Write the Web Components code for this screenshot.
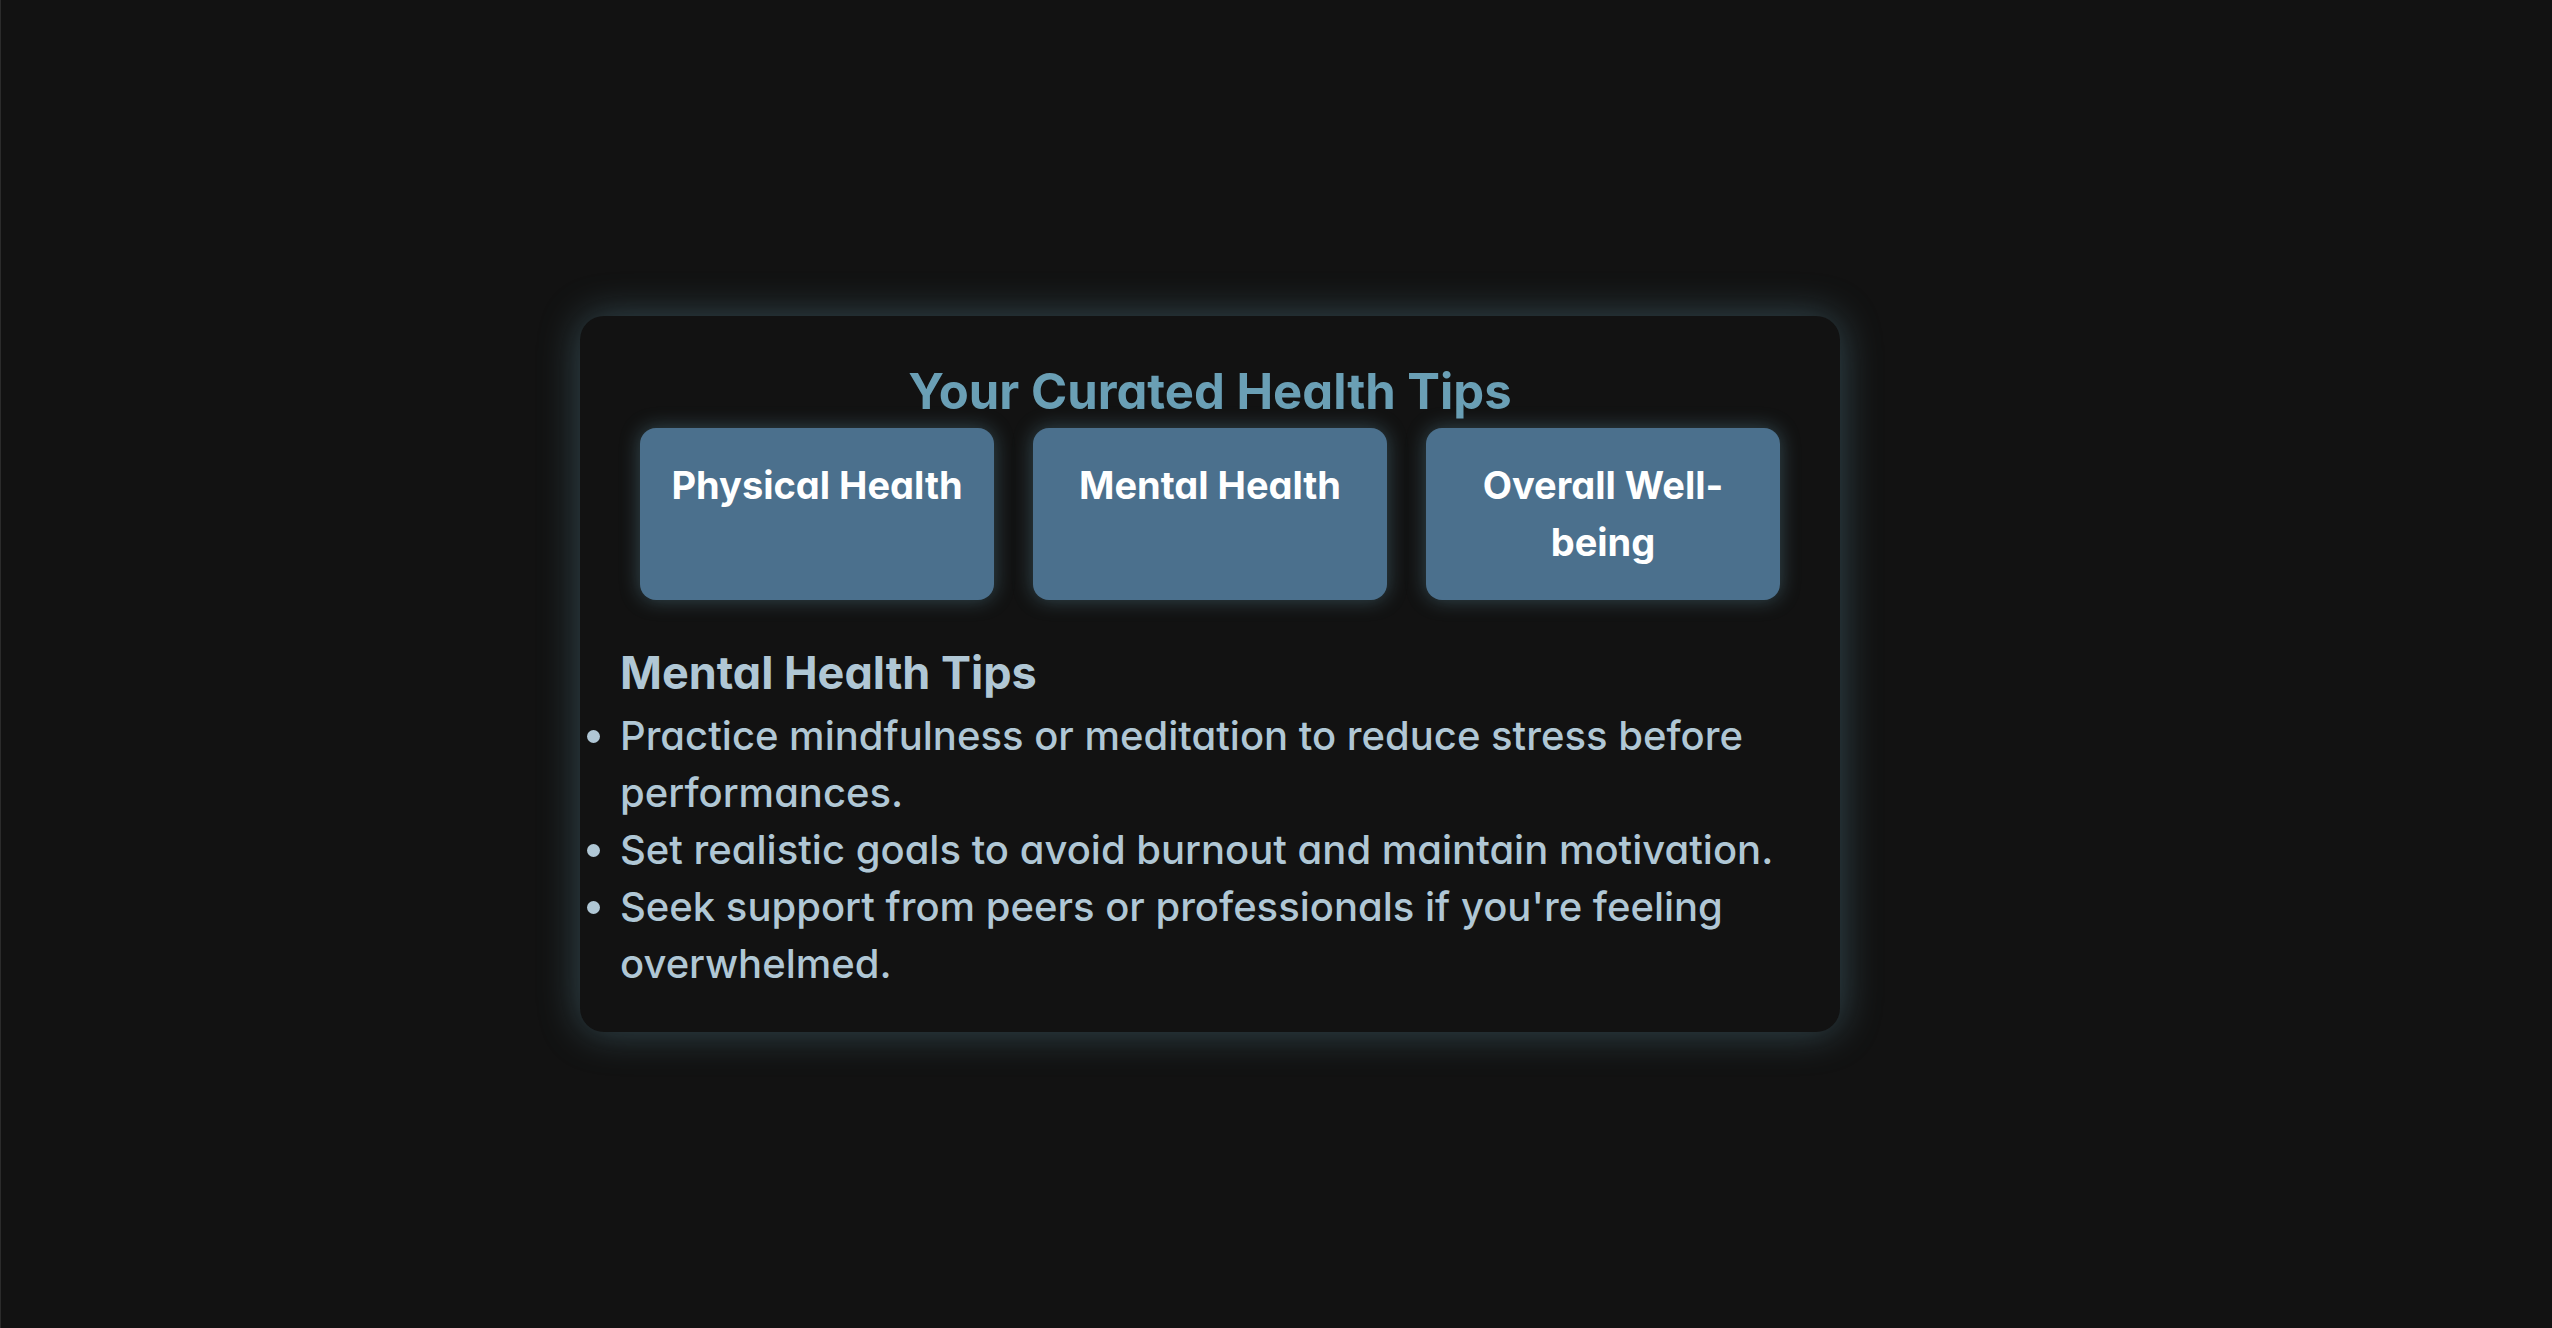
<!DOCTYPE html>
<html lang="en">
<head>
<meta charset="utf-8">
<title>Health Tips</title>
<style>
  body {
    margin: 0;
    background: #121212;
    color: #b0c7d5;
    font-family: Inter, "Open Sans", sans-serif;
    font-feature-settings: "cv11";
  }
</style>
</head>
<body>
<health-page>
  <tips-card heading="Your Curated Health Tips">
    <category-button slot="categories">Physical Health</category-button>
    <category-button slot="categories">Mental Health</category-button>
    <category-button slot="categories">Overall Well-being</category-button>
    <tip-list heading="Mental Health Tips">
      <tip-item>Practice mindfulness or meditation to reduce stress before performances.</tip-item>
      <tip-item>Set realistic goals to avoid burnout and maintain motivation.</tip-item>
      <tip-item>Seek support from peers or professionals if you're feeling overwhelmed.</tip-item>
    </tip-list>
  </tips-card>
</health-page>
<script>
  class BaseElement extends HTMLElement {
    connectedCallback() {
      if (this.shadowRoot) return;
      this.attachShadow({ mode: "open" }).innerHTML = this.constructor.markup;
      const heading = this.shadowRoot.querySelector("h2, h3");
      if (heading) heading.textContent = this.getAttribute("heading");
    }
  }

  customElements.define("health-page", class extends BaseElement {
    static markup = `
      <style>
        :host { display: block; }
        main {
          box-sizing: border-box;
          min-height: 100vh;
          display: flex;
          align-items: center;
          justify-content: center;
          padding: 20px 133px 0 0;
          border-left: 1px solid #2b2b2b;
        }
      </style>
      <main><slot></slot></main>`;
  });

  customElements.define("tips-card", class extends BaseElement {
    static markup = `
      <style>
        :host {
          display: block;
          box-sizing: border-box;
          width: 100%;
          max-width: 1260px;
          padding: 40px;
          border-radius: 24px;
          background: #121212;
          box-shadow: 0 0 40px rgba(106, 159, 181, 0.4);
        }
        h2 {
          margin: 0;
          font-size: 49px;
          font-weight: 700;
          line-height: 72px;
          text-align: center;
          color: #6a9fb5;
        }
        .categories {
          display: grid;
          grid-template-columns: repeat(3, 1fr);
          gap: 39px;
          padding: 0 20px;
          margin-bottom: 38px;
        }
      </style>
      <h2></h2>
      <div class="categories"><slot name="categories"></slot></div>
      <slot></slot>`;
  });

  customElements.define("category-button", class extends BaseElement {
    static markup = `
      <style>
        :host { display: flex; }
        button {
          flex: 1;
          display: flex;
          align-items: flex-start;
          justify-content: center;
          padding: 29px 16px;
          border: 0;
          border-radius: 16px;
          background: #4b708d;
          color: #fff;
          font: inherit;
          font-feature-settings: inherit;
          font-size: 38px;
          font-weight: 700;
          line-height: 57px;
          text-align: center;
          box-shadow: 0 0 20px rgba(106, 159, 181, 0.4);
          cursor: pointer;
        }
      </style>
      <button type="button"><span><slot></slot></span></button>`;
  });

  customElements.define("tip-list", class extends BaseElement {
    static markup = `
      <style>
        :host { display: block; }
        h3 {
          margin: 0;
          font-size: 45px;
          font-weight: 700;
          line-height: 69px;
        }
        .list { display: block; }
      </style>
      <h3></h3>
      <div class="list" role="list"><slot></slot></div>`;
  });

  customElements.define("tip-item", class extends BaseElement {
    static markup = `
      <style>
        :host {
          display: list-item;
          list-style: disc outside;
          font-size: 40px;
          font-weight: 450;
          line-height: 57px;
        }
      </style>
      <slot></slot>`;
    connectedCallback() {
      super.connectedCallback();
      this.setAttribute("role", "listitem");
    }
  });
</script>
</body>
</html>
